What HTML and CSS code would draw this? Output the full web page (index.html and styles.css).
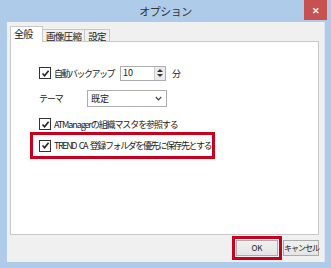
FILE: index.html
```html
<!DOCTYPE html>
<html lang="ja">
<head>
  <meta charset="UTF-8" />
  <title>オプション</title>
  <link rel="stylesheet" href="styles.css">
</head>
<body>
  <div class="window">
    <div class="titlebar">
      <span class="title">オプション</span>
      <span class="close">&#x2715;</span>
    </div>
    <div class="client">
      <div class="tabs">
        <span class="tab active">全般</span>
        <span class="tab">画像圧縮</span>
        <span class="tab">設定</span>
      </div>
      <div class="panel">
        <div class="row first">
          <span class="check"><svg viewBox="0 0 9 9" width="9" height="9"><path d="M1.5 4.5 L3.6 6.8 L7.6 1.8" fill="none" stroke="#222" stroke-width="1.6"/></svg></span>
          <span class="label backup">自動バックアップ</span>
          <span class="spin">
            <span class="spin-val">10</span>
            <span class="spin-btn"><span class="up"></span><span class="down"></span></span>
          </span>
          <span class="unit">分</span>
        </div>
        <div class="row theme">
          <span class="label theme-label">テーマ</span>
          <span class="select">
            <span>既定</span>
            <svg viewBox="0 0 7 5" width="7" height="5"><path d="M0.8 1 L3.5 3.8 L6.2 1" fill="none" stroke="#444" stroke-width="1.2"/></svg>
          </span>
        </div>
        <div class="row third">
          <span class="check"><svg viewBox="0 0 9 9" width="9" height="9"><path d="M1.5 4.5 L3.6 6.8 L7.6 1.8" fill="none" stroke="#222" stroke-width="1.6"/></svg></span>
          <span class="label">ATManagerの組織マスタを参照する</span>
        </div>
        <div class="mark">
          <div class="row">
            <span class="check"><svg viewBox="0 0 9 9" width="9" height="9"><path d="M1.5 4.5 L3.6 6.8 L7.6 1.8" fill="none" stroke="#222" stroke-width="1.6"/></svg></span>
            <span class="label">TREND CA 登録フォルダを優先に保存先とする</span>
          </div>
        </div>
      </div>
      <div class="buttons">
        <span class="mark-btn"><span class="btn ok">OK</span></span>
        <span class="btn cancel">キャンセル</span>
      </div>
    </div>
  </div>
</body>
</html>
```

FILE: styles.css
```css
body { margin: 0; font-family: "Noto Sans CJK JP", "Noto Sans", sans-serif; font-size: 9px; color: #222; }
.window { width: 331px; height: 268px; background: #aecbea; display: flex; flex-direction: column; box-sizing: border-box; }
.titlebar { height: 22px; position: relative; display: flex; justify-content: center; align-items: center; }
.title { font-size: 11px; color: #333; margin-top: -1px; letter-spacing: -0.5px; }
.close { position: absolute; right: 4px; top: 0; width: 23px; height: 20px; background: #c75050; color: #fff; font-size: 9px; font-weight: bold; display: flex; align-items: center; justify-content: center; }
.client { margin: 0 6px 6px 7px; flex: 1; background: #f0f0f0; border: 1px solid #d9e5f2; border-width: 0 1px 0 0; padding: 5px 0 0 3px; display: flex; flex-direction: column; }
.tabs { display: flex; align-items: flex-end; height: 15px; }
.tab { height: 12px; line-height: 12px; padding: 0 3px; border: 1px solid #c8c8c8; border-bottom: none; background: #f0f0f0; color: #222; margin-left: -1px; font-size: 9.5px; letter-spacing: -0.7px; }
.tab.active { height: 15px; line-height: 14px; background: #fff; width: 25px; padding: 0 3px; margin-left: 0; position: relative; z-index: 1; font-size: 10px; }
.panel { width: 307px; height: 192px; background: #fff; border: 1px solid #c8c8c8; margin-top: -1px; box-sizing: content-box; }
.row { display: flex; align-items: center; margin-left: 28px; height: 12px; }
.row.first { margin-top: 24px; height: 14px; }
.check { width: 10px; height: 10px; border: 1px solid #333; background: #fff; display: flex; align-items: center; justify-content: center; margin-right: 3px; flex: none; }
.label { white-space: nowrap; letter-spacing: -1.1px; word-spacing: 2px; }
.backup { width: 66px; letter-spacing: -1.5px; }
.spin { width: 44px; height: 13px; border: 1px solid #abadb3; background: #fff; display: flex; align-items: stretch; }
.spin-val { flex: 1; padding-left: 2px; line-height: 12px; }
.spin-btn { width: 10px; border-left: 1px solid #d0d0d0; background: #ececec; display: flex; flex-direction: column; align-items: center; justify-content: center; gap: 2px; }
.up { border: 3px solid transparent; border-bottom-color: #333; border-top: none; }
.down { border: 3px solid transparent; border-top-color: #333; border-bottom: none; }
.unit { margin-left: 6px; }
.row.theme { margin-top: 10px; height: 17px; }
.theme-label { width: 48px; }
.select { width: 71px; height: 15px; border: 1px solid #acacac; background: #fff; display: flex; align-items: center; justify-content: space-between; padding: 0 4px 0 3px; }
.row.third { margin-top: 11px; }
.mark { margin: 2px 0 0 19px; width: 179px; height: 21px; border: 3px solid #c8001e; display: flex; align-items: center; }
.mark .row { margin-left: 6px; }
.mark .label { letter-spacing: -1.4px; }
.buttons { display: flex; justify-content: flex-end; align-items: center; margin-top: 1px; padding-right: 5px; }
.mark-btn { border: 3px solid #c8001e; padding: 1px; display: flex; }
.btn { height: 14px; line-height: 14px; border: 1px solid #acacac; background: linear-gradient(#f0f0f0, #e5e5e5); text-align: center; font-size: 8px; white-space: nowrap; }
.btn.ok { width: 40px; }
.btn.cancel { width: 34px; margin-left: 1px; letter-spacing: -1px; }
```
